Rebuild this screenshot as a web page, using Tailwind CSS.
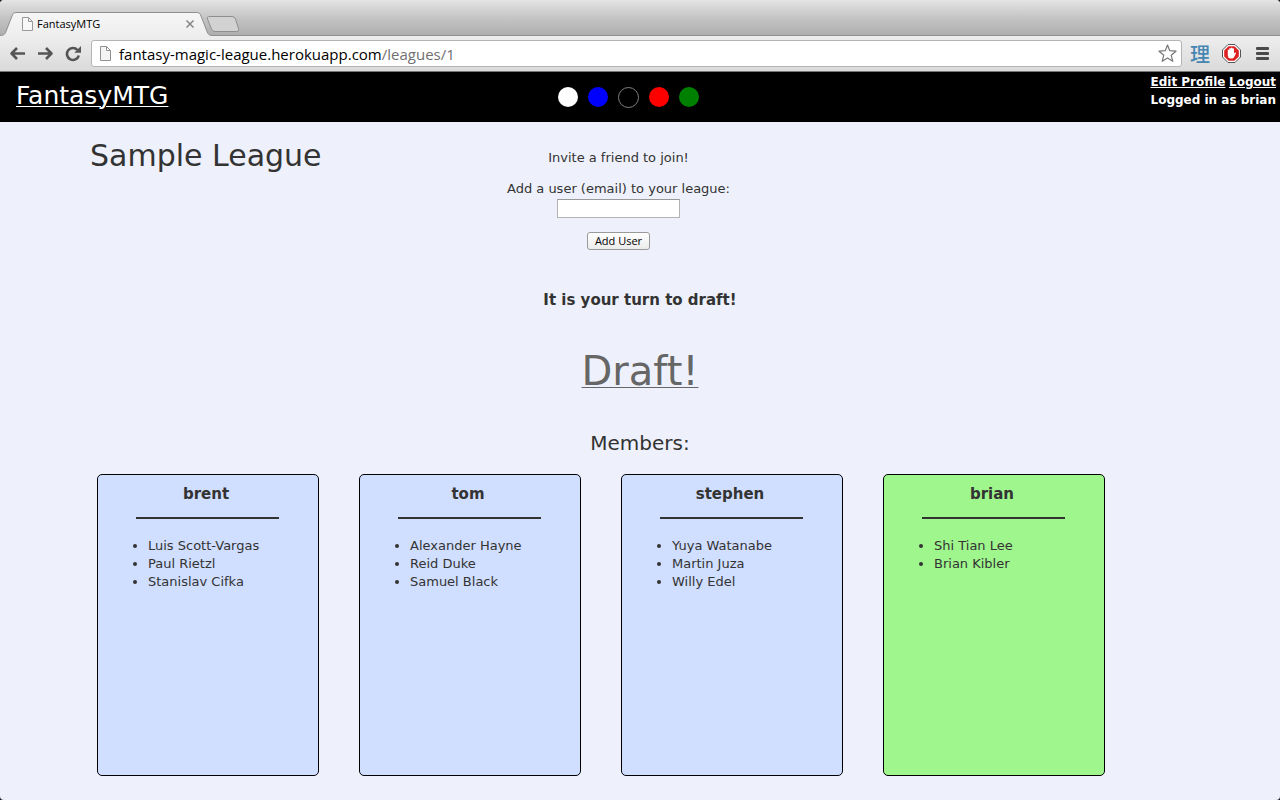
<!DOCTYPE html>
<html lang="en" class="bg-[#222222]">
<head>
<meta charset="utf-8">
<meta name="viewport" content="width=device-width, initial-scale=1">
<title>FantasyMTG</title>
<script src="https://cdn.jsdelivr.net/npm/@tailwindcss/browser@4"></script>
</head>
<body class="flex min-h-screen flex-col overflow-hidden rounded-[4px] bg-[#eef1fb] font-['DejaVu_Sans',sans-serif] text-[13px] leading-[18px] text-[#333333]">

<!-- Browser window frame -->
<div class="font-['Open_Sans','Noto_Sans',sans-serif] text-black">
  <div class="flex h-9 items-end rounded-t-[4px] bg-linear-to-b from-[#e4e4e4] via-[#c4c4c4] to-[#adadad]">
    <div class="relative h-6 w-[212px]">
      <svg class="absolute inset-0" width="212" height="24" viewBox="0 0 212 24" aria-hidden="true">
        <defs><linearGradient id="tab" x2="0" y2="1"><stop stop-color="#f6f6f6"/><stop offset="1" stop-color="#eeeeee"/></linearGradient></defs>
        <path d="M0 23.500C4 23.500 5 22 6 19.500L12 4C13 1 14 .500 17 .500H196C199 .500 200 1 201 4L207 19.500C208 22 209 23.500 212 23.500V24H0Z" fill="url(#tab)"/>
        <path d="M0 23.500C4 23.500 5 22 6 19.500L12 4C13 1 14 .500 17 .500H196C199 .500 200 1 201 4L207 19.500C208 22 209 23.500 212 23.500" fill="none" stroke="#8f8f8f"/>
      </svg>
      <div class="relative flex h-6 items-center pr-[17px] pl-[22px]">
        <svg width="11" height="14" viewBox="0 0 11 14" fill="#f8f8f8" stroke="#999" aria-hidden="true"><path d="M.5.5h6l4 4v9H.5zM6.500.500v4h4"/></svg>
        <span class="ml-1 flex-1 text-[11px]">FantasyMTG</span>
        <button type="button" aria-label="Close tab"><svg width="10" height="10" viewBox="0 0 10 10" stroke="#858585" stroke-width="1.500"><path d="M1.500 1.500l7 7M8.500 1.500l-7 7"/></svg></button>
      </div>
    </div>
    <button type="button" aria-label="New tab" class="-ml-1.5 mb-1"><svg width="34" height="16" viewBox="0 0 34 16"><path d="M4 .5H26Q28.500.500 29.500 3L32.500 12.500Q33.500 15.500 31 15.500H9Q6.500 15.500 5.500 13L1.500 3Q.500.500 4 .500Z" fill="#d2d2d2" stroke="#8f8f8f"/></svg></button>
    <div class="-ml-7 h-px flex-1 bg-[#8f8f8f]"></div>
  </div>
  <div class="flex h-9 items-center border-b border-[#777777] bg-linear-to-b from-[#eeeeee] to-[#dadada] pr-[11px] pl-[9px]">
    <button type="button" aria-label="Back"><svg width="17" height="16" viewBox="0 0 17 16" fill="none" stroke="#555" stroke-width="2.600" stroke-linejoin="round"><path d="M16 7.500H2.500M8 2L2.500 7.500L8 13"/></svg></button>
    <button type="button" aria-label="Forward" class="ml-3"><svg width="17" height="16" viewBox="0 0 17 16" fill="none" stroke="#555" stroke-width="2.600" stroke-linejoin="round"><path d="M0 7.500H13.500M8 2L13.500 7.500L8 13"/></svg></button>
    <button type="button" aria-label="Reload" class="ml-2.5"><svg width="17" height="16" viewBox="0 0 17 16"><path d="M12.500 4A6 6 0 1 0 13.800 9.500" fill="none" stroke="#555" stroke-width="2.600"/><path d="M16 0V6.700H9.300Z" fill="#555"/></svg></button>
    <div class="ml-[9px] flex h-[27px] flex-1 items-center rounded-[3px] border border-[#b4b4b4] bg-white pr-1 pl-2">
      <svg width="11" height="15" viewBox="0 0 11 15" fill="#f4f4f4" stroke="#909090" aria-hidden="true"><path d="M.5.5h6l4 4v10H.5zM6.500.500v4h4"/></svg>
      <a href="#" class="ml-2 flex-1 text-[15px]">fantasy-magic-league.herokuapp.com<span class="text-[#707070]">/leagues/1</span></a>
      <button type="button" aria-label="Bookmark"><svg width="19" height="19" viewBox="0 0 19 19" fill="#fff" stroke="#777" stroke-width="1.200" stroke-linejoin="round"><path d="M9.500 1L11.800 6.700L18 7.200L13.200 11.200L14.800 17.300L9.500 14L4.200 17.300L5.800 11.200L1 7.200L7.200 6.700Z"/></svg></button>
    </div>
    <button type="button" class="ml-2 font-['Noto_Sans_CJK_SC',sans-serif] text-[20px] font-medium text-[#4686b2]">理</button>
    <button type="button" aria-label="Ad blocker" class="ml-3"><svg width="19" height="19" viewBox="0 0 19 19"><path d="M6 .5H13L18.500 6V13L13 18.500H6L.500 13V6Z" fill="#fff" stroke="#555"/><path d="M6.600 2.200H12.400L16.800 6.600V12.400L12.400 16.800H6.600L2.200 12.400V6.600Z" fill="#df2020"/><path d="M5.800 6Q6.500 5 7.300 6V8.500V4.600Q8.100 3.600 8.900 4.600V8.300V4Q9.700 3 10.500 4V8.300V4.800Q11.300 3.800 12 4.800V9.500L13 8.500Q14.300 8.200 14 9.200L12.200 13Q11.300 14.500 9.700 14.500H8.500Q5.800 14 5.800 11.500Z" fill="#fff"/></svg></button>
    <button type="button" aria-label="Menu" class="ml-[15px]"><svg width="13" height="14" viewBox="0 0 13 14" fill="#4a4a4a"><rect width="13" height="3" rx="1"/><rect y="5" width="13" height="3" rx="1"/><rect y="10" width="13" height="3" rx="1"/></svg></button>
  </div>
</div>

<!-- Site header -->
<header class="flex h-[50px] bg-black text-white">
  <div class="flex-1 pl-4"><a href="#" class="text-[25px] leading-[48px] underline decoration-1 underline-offset-2">FantasyMTG</a></div>
  <div class="mr-[35px] flex items-center gap-2.5" aria-hidden="true">
    <span class="size-5 rounded-full bg-white"></span>
    <span class="size-5 rounded-full bg-[#0000ff]"></span>
    <span class="size-[21px] rounded-full border border-[#808080] bg-black"></span>
    <span class="size-5 rounded-full bg-[#ff0000]"></span>
    <span class="size-5 rounded-full bg-[#008000]"></span>
  </div>
  <div class="flex flex-1 justify-end pt-px pr-1 text-xs leading-[18px] font-bold">
    <div><nav class="flex justify-between"><a href="#" class="underline">Edit Profile</a><a href="#" class="underline">Logout</a></nav><p>Logged in as brian</p></div>
  </div>
</header>

<main class="mx-auto w-full max-w-[1100px] flex-1 pb-6">
  <div class="grid grid-cols-[1fr_auto_1fr] pt-4">
    <h1 class="text-[30px] leading-9">Sample League</h1>
    <form class="mr-[43px] flex flex-col items-center pt-[11px]">
      <p>Invite a friend to join!</p>
      <label for="email" class="mt-[13px]">Add a user (email) to your league:</label>
      <input id="email" type="email" class="mt-px h-[19px] w-[123px] border border-[#b4b4b4] border-t-[#999999] bg-white px-1">
      <button type="button" class="mt-3.5 h-[18px] rounded-[3px] border border-[#999999] bg-linear-to-b from-white to-[#ececec] px-[7px] font-['Open_Sans',sans-serif] text-[11px] leading-4 text-black">Add User</button>
    </form>
  </div>
  <p class="mt-10 text-center text-[15px] leading-5 font-bold">It is your turn to draft!</p>
  <p class="mt-9 text-center text-[40px] leading-[50px] text-[#666666]"><a href="#" class="underline decoration-1 underline-offset-2">Draft!</a></p>
  <h2 class="mt-[33px] text-center text-[20px] leading-7">Members:</h2>

  <div class="mt-[17px] mr-[85px] ml-[7px] grid grid-cols-4 gap-10">
    <section class="min-h-[302px] rounded-[5px] border border-black bg-[#d0deff] pt-[9px]">
      <h3 class="mr-1 text-center text-[15px] leading-5 font-bold">brent</h3>
      <hr class="mt-[13px] mr-[39px] ml-[38px] border-t-2 border-[#333333]">
      <ul class="mt-[18px] list-disc pl-[50px]"><li>Luis Scott-Vargas</li><li>Paul Rietzl</li><li>Stanislav Cifka</li></ul>
    </section>
    <section class="min-h-[302px] rounded-[5px] border border-black bg-[#d0deff] pt-[9px]">
      <h3 class="mr-1 text-center text-[15px] leading-5 font-bold">tom</h3>
      <hr class="mt-[13px] mr-[39px] ml-[38px] border-t-2 border-[#333333]">
      <ul class="mt-[18px] list-disc pl-[50px]"><li>Alexander Hayne</li><li>Reid Duke</li><li>Samuel Black</li></ul>
    </section>
    <section class="min-h-[302px] rounded-[5px] border border-black bg-[#d0deff] pt-[9px]">
      <h3 class="mr-1 text-center text-[15px] leading-5 font-bold">stephen</h3>
      <hr class="mt-[13px] mr-[39px] ml-[38px] border-t-2 border-[#333333]">
      <ul class="mt-[18px] list-disc pl-[50px]"><li>Yuya Watanabe</li><li>Martin Juza</li><li>Willy Edel</li></ul>
    </section>
    <section class="min-h-[302px] rounded-[5px] border border-black bg-[#9ff68d] pt-[9px]">
      <h3 class="mr-1 text-center text-[15px] leading-5 font-bold">brian</h3>
      <hr class="mt-[13px] mr-[39px] ml-[38px] border-t-2 border-[#333333]">
      <ul class="mt-[18px] list-disc pl-[50px]"><li>Shi Tian Lee</li><li>Brian Kibler</li></ul>
    </section>
  </div>
</main>
</body>
</html>
